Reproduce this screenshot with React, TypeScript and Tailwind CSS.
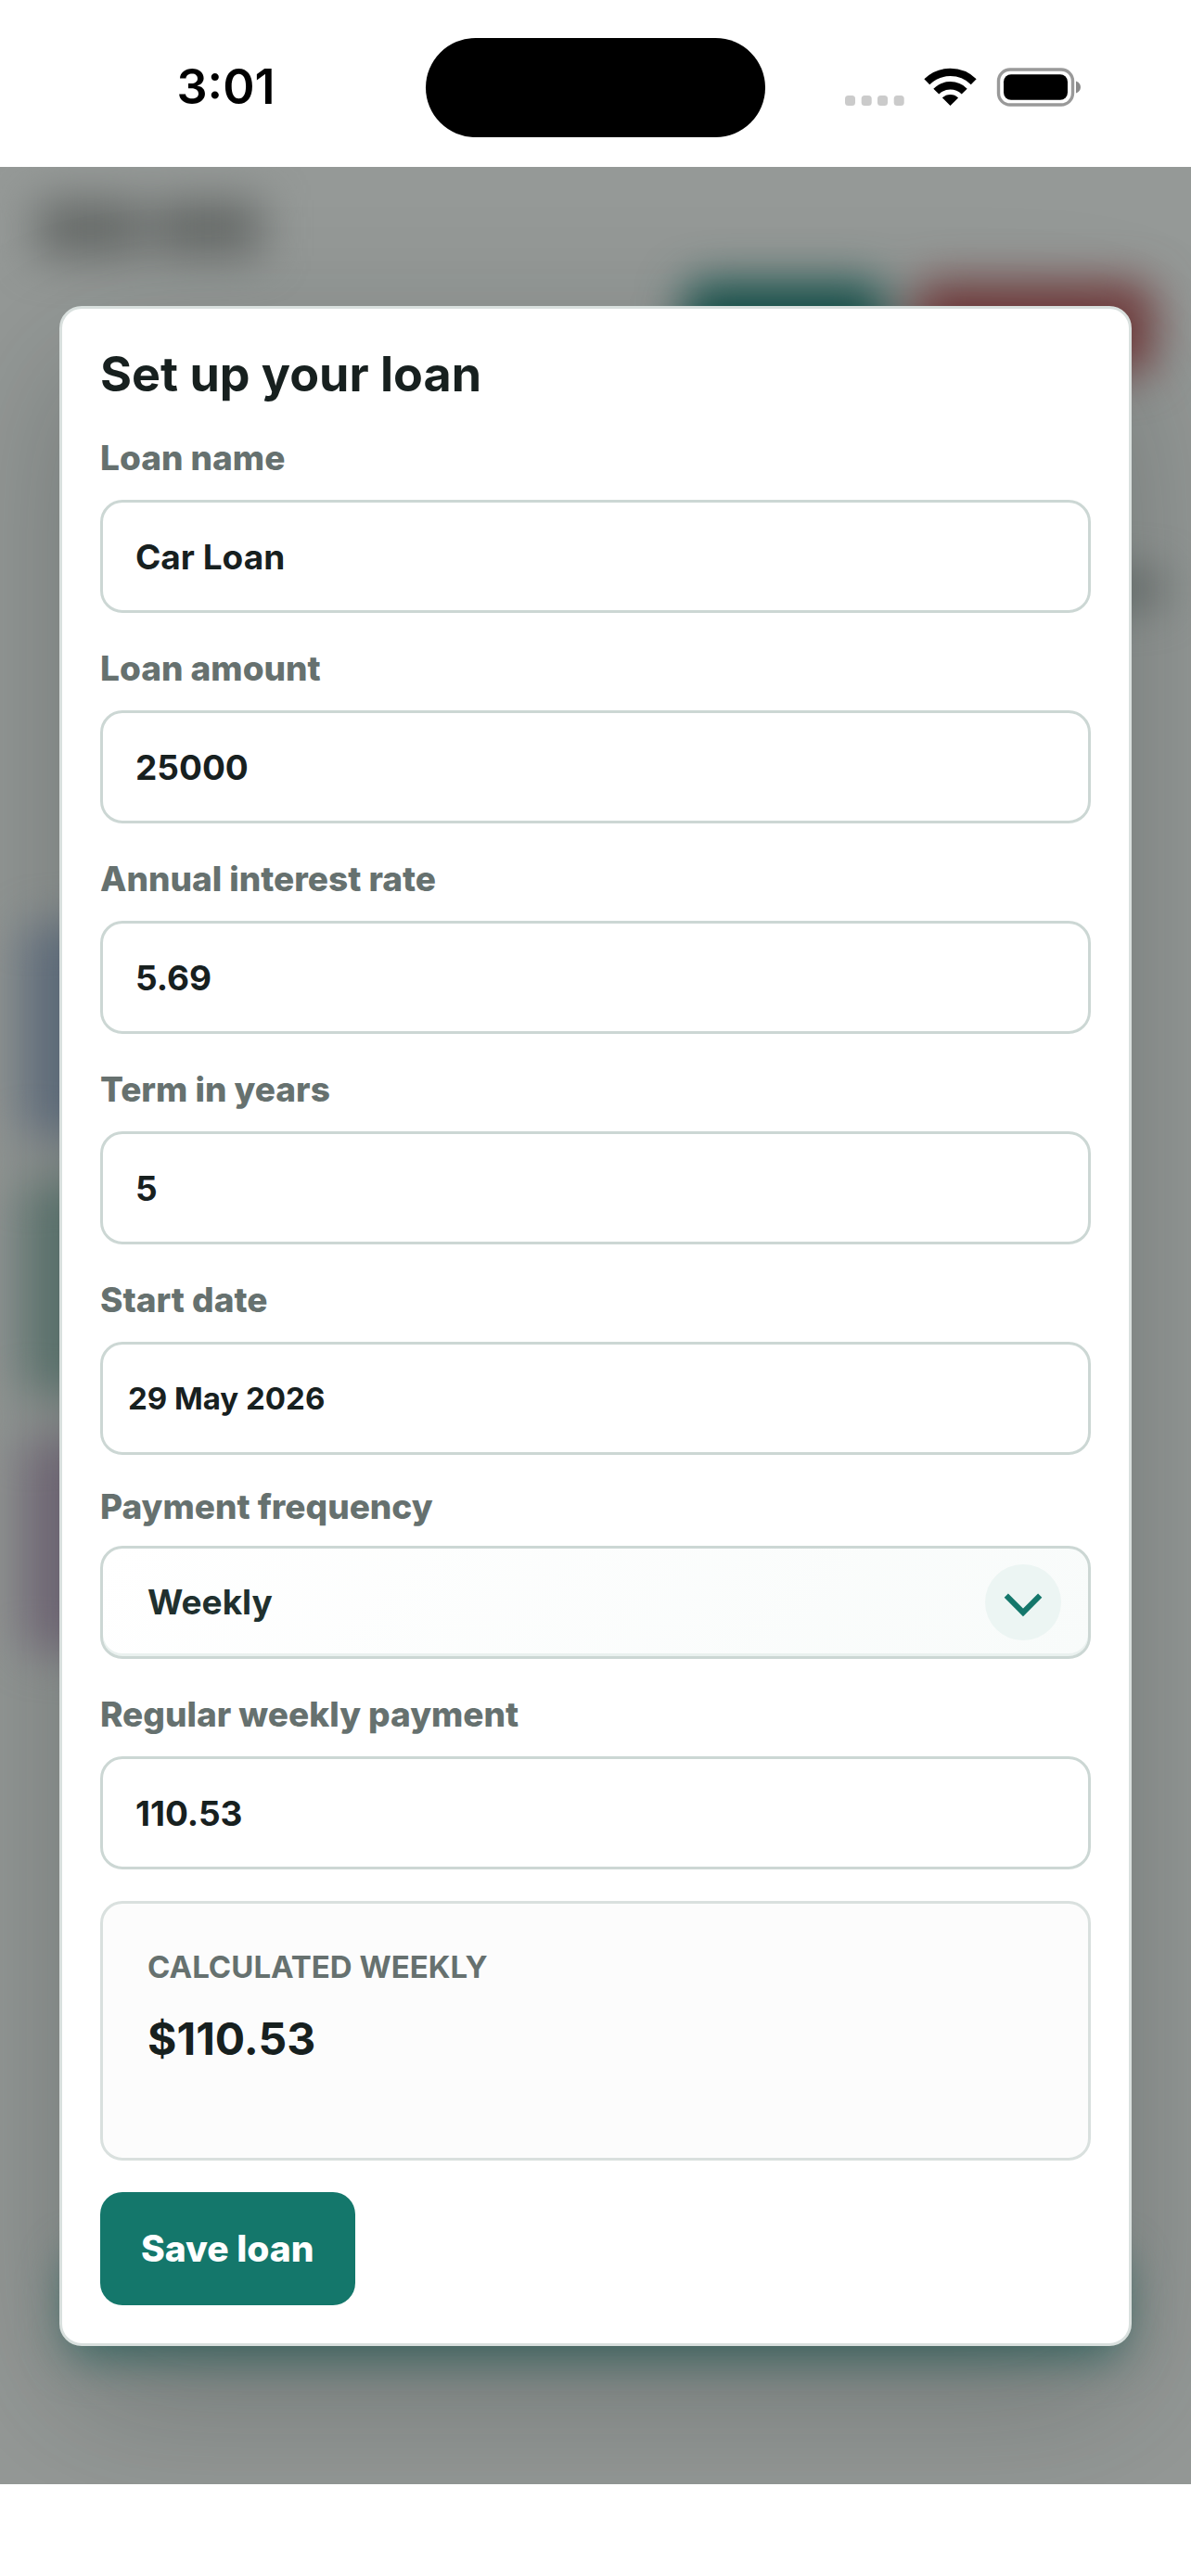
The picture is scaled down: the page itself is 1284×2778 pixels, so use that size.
import { useState } from "react";
import type { ReactNode } from "react";

const controlClass =
  "block h-[122px] w-full rounded-[24px] border-[3px] border-[#ccd7d4] bg-white text-[#17201f] outline-none focus:border-[#14776b]";

function Field({ id, label, tight, children }: { id: string; label: string; tight?: boolean; children: ReactNode }) {
  return (
    <div className={tight ? "flex flex-col gap-[20px]" : "flex flex-col gap-[19px]"}>
      <label
        htmlFor={id}
        className={
          tight
            ? "text-[37px] leading-[44px] font-extrabold text-[#66716f]"
            : "text-[37px] leading-[52px] font-extrabold text-[#66716f]"
        }
      >
        {label}
      </label>
      {children}
    </div>
  );
}

function TextField({ id, label, initial }: { id: string; label: string; initial: string }) {
  const [value, setValue] = useState(initial);
  return (
    <Field id={id} label={label}>
      <input
        id={id}
        type="text"
        value={value}
        onChange={(e) => setValue(e.target.value)}
        className={`${controlClass} px-[35px] text-[37px] font-bold`}
      />
    </Field>
  );
}

function StatusBar() {
  return (
    <header className="grid h-[180px] grid-cols-[1fr_366px_1fr] items-center bg-white pt-2 text-black">
      <div className="pl-7 text-center text-[52px] leading-none font-semibold">3:01</div>
      <div className="h-[107px] rounded-full bg-black" />
      <div className="flex items-center justify-end pr-[119px]">
        <svg width="254" height="42" viewBox="0 0 254 42" role="img" aria-label="Wi-Fi connected, battery full">
          <g fill="#cbcbcb">
            <rect x="0" y="30" width="11" height="11" rx="3.5" />
            <rect x="17.7" y="30" width="11" height="11" rx="3.5" />
            <rect x="35" y="30" width="11" height="11" rx="3.5" />
            <rect x="52.7" y="30" width="11" height="11" rx="3.5" />
          </g>
          <g fill="none" stroke="#000" strokeWidth="8.4">
            <path d="M88.3 15.2a36 36 0 0 1 50.4 0" />
            <path d="M98.3 25.6a21.5 21.5 0 0 1 30.4 0" />
          </g>
          <path d="M113.5 41l-8.6-8.6a12.4 12.4 0 0 1 17.2 0z" fill="#000" />
          <rect x="165.5" y="2" width="80" height="38" rx="12.5" fill="none" stroke="#999" strokeWidth="3.4" />
          <rect x="171" y="7.250" width="69" height="27.500" rx="8" fill="#000" />
          <path d="M249 14.500c3 1 5 3.500 5 6.500s-2 5.500-5 6.500z" fill="#8a8a8a" />
        </svg>
      </div>
    </header>
  );
}

function DimmedPage() {
  return (
    <div aria-hidden="true" className="absolute inset-0 overflow-hidden bg-[#959997]">
      <div className="flex flex-col px-6 blur-[24px]">
        <div className="flex gap-3 pt-9 pl-4">
          <div className="h-[60px] w-[115px] bg-[#656967]" />
          <div className="h-[60px] w-[115px] bg-[#656967]" />
        </div>
        <div className="mt-7 flex justify-end gap-7 pr-4">
          <div className="h-[100px] w-[220px] rounded-3xl bg-[#14524b]" />
          <div className="h-[100px] w-[260px] rounded-3xl bg-[#733b3c]" />
        </div>
        <div className="mt-[215px] mr-2 h-[32px] w-[250px] self-end bg-[#626967]" />
        <div className="mt-[345px] flex w-1/2 flex-col gap-[48px]">
          <div className="h-[230px] rounded-3xl bg-[#6a7787]" />
          <div className="h-[230px] rounded-3xl bg-[#657d77]" />
          <div className="h-[230px] rounded-3xl bg-[#7c7180]" />
        </div>
        <div className="mx-12 mt-[650px] h-[110px] rounded-3xl bg-[#43756f]" />
      </div>
    </div>
  );
}

export default function App() {
  const [frequency, setFrequency] = useState("Weekly");

  return (
    <div className="min-h-screen bg-white font-['Inter','Liberation_Sans',sans-serif]">
      <StatusBar />
      <main className="relative overflow-hidden px-16 pt-[150px] pb-[149px]">
        <DimmedPage />
        <form
          onSubmit={(e) => e.preventDefault()}
          className="relative flex flex-col gap-[34px] rounded-[24px] border-[3px] border-[#d9e0de] bg-white p-[41px] shadow-[0_60px_160px_rgba(23,32,31,0.28)]"
        >
          <h1 className="text-[52px] leading-[60px] font-bold text-[#17201f]">Set up your loan</h1>

          <TextField id="loan-name" label="Loan name" initial="Car Loan" />
          <TextField id="loan-amount" label="Loan amount" initial="25000" />
          <TextField id="interest-rate" label="Annual interest rate" initial="5.69" />
          <TextField id="term" label="Term in years" initial="5" />

          <Field id="start-date" label="Start date">
            <input
              id="start-date"
              type="text"
              defaultValue="29 May 2026"
              className={`${controlClass} px-[27px] text-[33px] font-bold`}
            />
          </Field>

          <Field id="frequency" label="Payment frequency" tight>
            <div className="relative">
              <select
                id="frequency"
                value={frequency}
                onChange={(e) => setFrequency(e.target.value)}
                className="block h-[122px] w-full appearance-none rounded-[24px] border-[3px] border-[#ccd7d4] bg-linear-135 from-white to-[#f8fbfa] px-12 text-[37px] font-bold text-[#20302e] shadow-[inset_0_-3px_0_#eaf1ef] outline-none"
              >
                <option>Weekly</option>
                <option>Fortnightly</option>
                <option>Monthly</option>
              </select>
              <span className="pointer-events-none absolute inset-y-0 right-8 flex items-center">
                <svg width="82" height="82" viewBox="0 0 82 82" aria-hidden="true">
                  <circle cx="41" cy="41" r="41" fill="#ecf5f3" />
                  <path d="M22.800 33.700l18.200 18.200 18.200-18.200" fill="none" stroke="#14776b" strokeWidth="6" />
                </svg>
              </span>
            </div>
          </Field>

          <TextField id="payment" label="Regular weekly payment" initial="110.53" />

          <section className="flex h-[280px] flex-col gap-[30px] rounded-[24px] border-[3px] border-[#d9e0de] bg-[#fcfcfc] px-12 pt-12">
            <h2 className="text-[33px] leading-[40px] font-bold text-[#66716f] uppercase">Calculated weekly</h2>
            <output className="text-[48px] leading-[56px] font-bold text-[#17201f]">$110.53</output>
          </section>

          <button
            type="submit"
            className="h-[122px] self-start rounded-[24px] bg-[#14776b] px-11 text-[39px] font-extrabold text-white"
          >
            Save loan
          </button>
        </form>
      </main>
    </div>
  );
}
